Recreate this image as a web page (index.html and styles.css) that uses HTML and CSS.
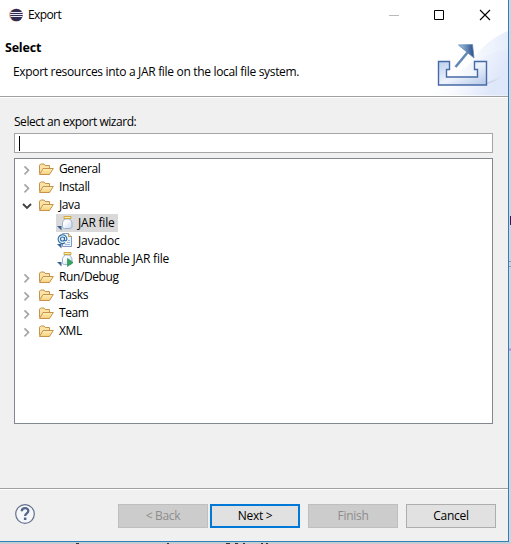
FILE: index.html
```
<!DOCTYPE html>
<html lang="en">
<head>
<meta charset="utf-8">
<title>Export</title>
<link rel="stylesheet" href="styles.css">
</head>
<body>
<svg width="0" height="0" class="defs">
  <defs>
    <linearGradient id="gold" x1="0" y1="0" x2="0" y2="1"><stop offset="0" stop-color="#fff0b8"/><stop offset="1" stop-color="#f5cf7c"/></linearGradient>
    <linearGradient id="glass" x1="0" y1="0" x2="1" y2="1"><stop offset="0.300" stop-color="#fff"/><stop offset="1" stop-color="#c5d6ee"/></linearGradient>
    <symbol id="folder" viewBox="0 0 16 16">
      <path d="M1.500 12.500V4.200L2.700 3H6l1.200 1.500h4.300v3" fill="#fbe3a6" stroke="#c6924c"/>
      <path d="M1.500 13.500 5 7.500h10.300l-3.800 6z" fill="url(#gold)" stroke="#c6924c" stroke-linejoin="round"/>
    </symbol>
    <symbol id="closed" viewBox="0 0 10 12"><path d="M2.500 2.300 6.500 6.300 2.500 10.300" fill="none" stroke="#a6a6a6" stroke-width="1.700"/></symbol>
    <symbol id="open" viewBox="0 0 10 12"><path d="M1 4 5 8 9 4" fill="none" stroke="#404040" stroke-width="1.900"/></symbol>
    <symbol id="jar" viewBox="0 0 18 16">
      <path d="M8.500 4h5.500c0 1.500 2 2 2 4v3.500c0 1.500-.8 2-2 2H8.500c-1.200 0-2-.5-2-2V8c0-2 2-2.500 2-4z" fill="url(#glass)" stroke="#9cb0d0"/>
      <path d="M8 1.500h7v2H8z" fill="#fbeeaa" stroke="#d0ab45"/>
      <path d="M1 11h4.500v4.500z" fill="#3b6290"/>
    </symbol>
    <symbol id="javadoc" viewBox="0 0 18 16">
      <path d="M6.500.500h6l3 3v10h-9z" fill="#edf3fc" stroke="#819bc2"/><path d="M12.500.500v3h3" fill="#fff2b9" stroke="#b59b55"/>
      <path d="M12 7.500h2M11 9.500h3M9 11.500h5" stroke="#9bb8df"/>
      <circle cx="6.500" cy="6" r="5" fill="#e5f1fb"/>
      <path d="M9 9.800A4.400 4.400 0 1 1 10.900 6c0 2-2.400 2.500-2.400.5V4M8.500 6a2 2 0 1 1-4 0 2 2 0 0 1 4 0" fill="none" stroke="#316d9f" stroke-width="1.100"/>
      <path d="M1 11h4.500v4.500z" fill="#3b6290"/>
    </symbol>
  </defs>
</svg>
<div class="desktop">
  <main class="window">
    <header class="banner">
      <div class="titlebar">
        <svg class="logo" width="14" height="14" viewBox="0 0 14 14"><circle cx="6.500" cy="7" r="6.300" fill="#f5a064"/><circle cx="7.500" cy="7" r="6.300" fill="#302b55"/><path d="M1.500 4.500h12M1 6.500h13M1.500 8.500h12" stroke="#e8e8f3" stroke-width="1"/></svg>
        <span class="caption">Export</span>
        <svg class="controls" width="102" height="12" viewBox="0 0 102 12"><path d="M0 6.500h10" stroke="#bbb"/><path d="M45.500 1.500h9v9h-9z" fill="none" stroke="#000"/><path d="m91 1 10 10M101 1 91 11" stroke="#000" stroke-width="1.100"/></svg>
      </div>
      <div class="headline">
        <div class="copy">
          <h1>Select</h1>
          <p>Export resources into a JAR file on the local file system.</p>
        </div>
        <svg class="art" width="78" height="67" viewBox="0 0 78 67">
          <defs>
            <linearGradient id="sky" x1="0.100" y1="0" x2="1" y2="0"><stop offset="0" stop-color="#fff"/><stop offset="1" stop-color="#e6edfb"/></linearGradient>
            <linearGradient id="haze" x1="0.200" y1="0" x2="1" y2="0.300"><stop offset="0" stop-color="#fff" stop-opacity="0"/><stop offset="1" stop-color="#dfe7fa"/></linearGradient>
            <linearGradient id="tray" x1="0" y1="0" x2="1" y2="1"><stop offset="0" stop-color="#bdcfed"/><stop offset=".5" stop-color="#edf3fc"/><stop offset="1" stop-color="#b4c7e8"/></linearGradient>
            <linearGradient id="arrow" x1="0" y1="0" x2="1" y2="0"><stop offset="0" stop-color="#a9cde9"/><stop offset="1" stop-color="#294b87"/></linearGradient>
            <linearGradient id="shade" x1="0" y1="0" x2="1" y2="0"><stop offset="0" stop-color="#bcc7dc"/><stop offset="1" stop-color="#e3eaf9" stop-opacity="0"/></linearGradient>
          </defs>
          <path d="M78 2C58 10 40 26 22 67h56z" fill="url(#sky)"/>
          <path d="M78 20C55 24 33 36 0 66h78z" fill="url(#haze)"/>
          <path d="M57 54 76 45 66 52 57 55z" fill="url(#shade)"/>
          <path d="M8.500 32.500h11v8h-3v7.500h31v-7.500h-3v-8h12V56h-48z" fill="url(#tray)" stroke="#456aa5" stroke-width="1.400"/>
          <path d="M25.500 38 37.500 23.500" stroke="#6289b5" stroke-width="2.600"/>
          <path d="M28.500 16 42.500 15.500 44 29z" fill="url(#arrow)" stroke="#6288b6" stroke-width=".8"/>
        </svg>
      </div>
    </header>
    <section class="body">
      <label for="filter">Select an export wizard:</label>
      <div class="field" id="filter"><span class="caret"></span></div>
      <ul class="tree">
        <li><svg class="chev"><use href="#closed"/></svg><svg class="folder"><use href="#folder"/></svg><span>General</span></li>
        <li><svg class="chev"><use href="#closed"/></svg><svg class="folder"><use href="#folder"/></svg><span>Install</span></li>
        <li><svg class="chev"><use href="#open"/></svg><svg class="folder"><use href="#folder"/></svg><span>Java</span></li>
        <li class="child selected"><svg class="file"><use href="#jar"/></svg><span>JAR file</span></li>
        <li class="child"><svg class="file"><use href="#javadoc"/></svg><span>Javadoc</span></li>
        <li class="child"><svg class="file"><use href="#jar"/><path d="m11.500 7.500 5.500 4-5.500 4z" fill="#35a65e" stroke="#23834a" stroke-width=".6"/></svg><span>Runnable JAR file</span></li>
        <li><svg class="chev"><use href="#closed"/></svg><svg class="folder"><use href="#folder"/></svg><span>Run/Debug</span></li>
        <li><svg class="chev"><use href="#closed"/></svg><svg class="folder"><use href="#folder"/></svg><span>Tasks</span></li>
        <li><svg class="chev"><use href="#closed"/></svg><svg class="folder"><use href="#folder"/></svg><span>Team</span></li>
        <li><svg class="chev"><use href="#closed"/></svg><svg class="folder"><use href="#folder"/></svg><span>XML</span></li>
      </ul>
    </section>
    <footer class="actions">
      <svg class="help" width="22" height="22" viewBox="0 0 22 22"><circle cx="11" cy="11" r="9.300" fill="#f5f7fa" stroke="#63718e" stroke-width="1.200"/><path d="M7.800 8.300C7.800 4 14.500 4.300 14.300 8c-.1 2.400-3.200 2.300-3.200 5" fill="none" stroke="#53658b" stroke-width="2.300"/><path d="M9.900 14.500h2.500V17H9.900z" fill="#53658b"/></svg>
      <button class="off" disabled>&lt; Back</button>
      <button class="primary">Next &gt;</button>
      <button class="off finish" disabled>Finish</button>
      <button class="cancel">Cancel</button>
    </footer>
  </main>
  <div class="behind">
    <svg width="511" height="2" viewBox="0 0 511 2"><path d="M76 1.500h3M167 1.500h2M226 1.500h4M235 1.500h3M243 1.500h2M261 1.500h2M266 1.500h2" stroke="#333"/></svg>
  </div>
  <svg class="edge" width="2" height="542" viewBox="0 0 2 542"><path d="M1 216h1v9H1z" fill="#3c1458"/><path d="M0 261.500h2M0 266.500h2" stroke="#829bb8"/><path d="M0 349.500h2" stroke="#b08ad8" stroke-width="2"/></svg>
</div>
</body>
</html>
```
FILE: styles.css
```
* { box-sizing: border-box; }
body { margin: 0; overflow: hidden; background: #ccd6e2; color: #000; font: 12px/18px "Open Sans", "Noto Sans", sans-serif; letter-spacing: -0.3px; }
svg { display: block; flex: none; }
.defs { position: absolute; }
.desktop { display: grid; grid-template-columns: 509px 2px; grid-template-rows: 542px 2px; width: 511px; height: 544px; }
.window { display: flex; flex-direction: column; background: #f0f0f0; border-right: 1px solid #2d80b8; border-bottom: 1px solid #2d80b8; }
.banner { height: 97px; background: #fff; border-bottom: 1px solid #a0a0a0; }
.titlebar { display: flex; align-items: center; height: 29px; padding-left: 9px; }
.caption { margin-left: 5px; letter-spacing: -0.6px; }
.controls { margin-left: auto; margin-right: 17px; }
.headline { display: flex; justify-content: space-between; height: 67px; }
.copy { padding: 9px 0 0 5px; }
h1 { margin: 0; font-size: 12.5px; line-height: 19px; font-weight: 700; letter-spacing: -0.2px; }
p { margin: 6px 0 0 8px; white-space: nowrap; letter-spacing: -0.32px; }
.body { flex: 1; padding: 15px 15px 0 14px; border-top: 1px solid #fff; }
.body label { display: block; height: 20px; letter-spacing: -0.46px; }
.field { height: 20px; background: #fff; border: 1px solid #a5a5a5; padding: 2px 4px; }
.caret { display: block; width: 1px; height: 15px; background: #000; }
.tree { height: 266px; margin: 5px 0 0; padding: 1px 0 0 6px; list-style: none; background: #fff; border: 1px solid #828790; }
.tree li { display: flex; align-items: center; height: 18px; }
.tree li:not(.child) span { letter-spacing: -0.4px; }
.chev { width: 10px; height: 12px; margin: 2px 6px 0 1px; }
.folder { width: 16px; height: 16px; margin-right: 5px; }
.tree .child { width: max-content; margin-left: 35px; letter-spacing: -0.2px; }
.file { width: 18px; height: 16px; margin-right: 4px; overflow: visible; }
.selected { background: #d9d9d9; padding-right: 3px; }
.actions { display: flex; height: 53px; padding: 14px 12px 0 14px; border-top: 1px solid #a0a0a0; box-shadow: inset 0 1px #fff; }
.help { margin-right: auto; }
button { width: 90px; height: 24px; margin: 1px 0 0; padding: 0; border: 1px solid #adadad; border-radius: 0; background: #e1e1e1; color: #000; font: inherit; letter-spacing: inherit; }
.off { border-color: #bfbfbf; background: #ccc; color: #8d8d8d; }
.primary { margin-left: 2px; border: 2px solid #0078d7; }
.finish, .cancel { margin-left: 8px; }
.behind { grid-column: 1 / 3; grid-row: 2; background: #c8cbd0; }
.edge { grid-column: 2; grid-row: 1; }
```
